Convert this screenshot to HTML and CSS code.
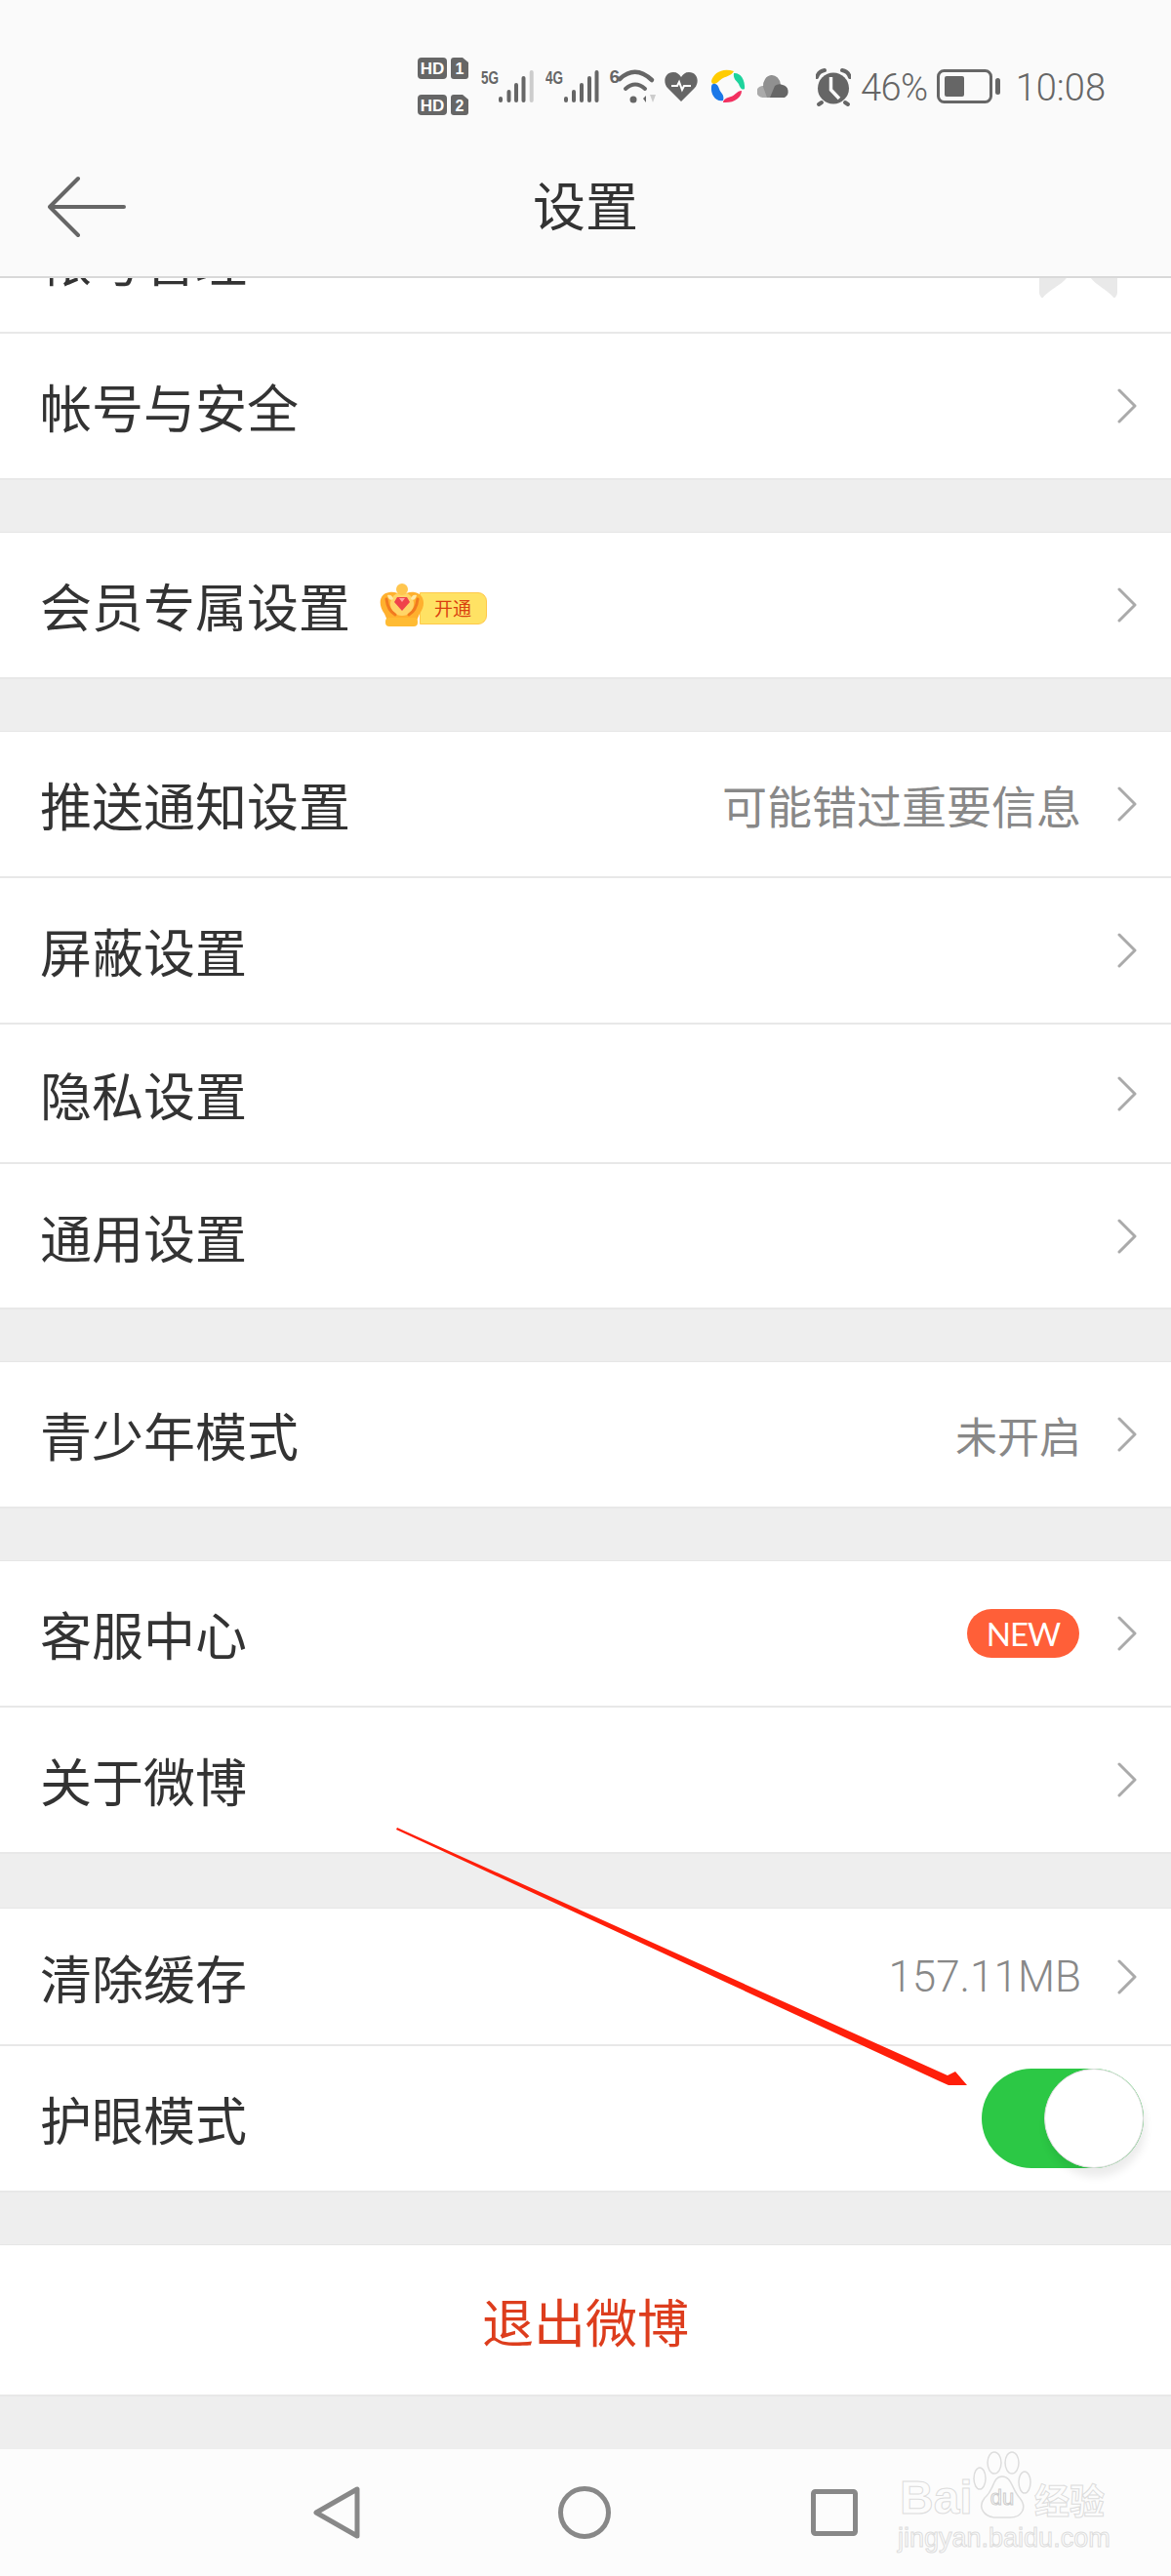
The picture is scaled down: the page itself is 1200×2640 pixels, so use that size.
FILE: index.html
```html
<!DOCTYPE html>
<html lang="zh-CN">
  <head>
    <meta charset="UTF-8" />
    <title>设置</title>
    <link rel="stylesheet" href="styles.css">
  </head>
  <body>
    <svg class="defs">
      <symbol id="chevron" viewBox="0 0 20 36">
        <path d="M2 2 L18 18 L2 34" fill="none" stroke="#aaa" stroke-width="3" stroke-linecap="round" stroke-linejoin="round" />
      </symbol>
    </svg>

    <header class="topbar">
      <div class="status">
        <svg class="ic" width="52" height="65" viewBox="0 0 52 65">
          <rect x="0" y="4" width="30" height="22" rx="4" fill="#666" />
          <text x="15" y="21" class="ic-txt light" text-anchor="middle" font-size="17">HD</text>
          <path d="M37 4 h9 l6 5 v14 a3 3 0 0 1 -3 3 h-12 a3 3 0 0 1 -3 -3 v-16 a3 3 0 0 1 3 -3z" fill="#666" />
          <text x="43" y="21" class="ic-txt light" text-anchor="middle" font-size="16">1</text>
          <rect x="0" y="42" width="30" height="21" rx="4" fill="#666" />
          <text x="15" y="58.500" class="ic-txt light" text-anchor="middle" font-size="17">HD</text>
          <path d="M37 42 h9 l6 5 v13 a3 3 0 0 1 -3 3 h-12 a3 3 0 0 1 -3 -3 v-15 a3 3 0 0 1 3 -3z" fill="#666" />
          <text x="43" y="58.500" class="ic-txt light" text-anchor="middle" font-size="16">2</text>
        </svg>
        <svg class="ic gap-13" width="54" height="65" viewBox="0 0 54 65">
          <text x="0" y="31" class="ic-txt" font-size="18" textLength="18" lengthAdjust="spacingAndGlyphs">5G</text>
          <rect x="18" y="44" width="4" height="6" rx="2" fill="#666" />
          <rect x="26.500" y="37" width="4" height="13" rx="2" fill="#666" />
          <rect x="34" y="30" width="4" height="20" rx="2" fill="#666" />
          <rect x="41.500" y="23" width="4" height="27" rx="2" fill="#666" />
          <rect x="49.700" y="17" width="4" height="33" rx="2" fill="#ccc" />
        </svg>
        <svg class="ic gap-12" width="55" height="65" viewBox="0 0 55 65">
          <text x="0" y="31" class="ic-txt" font-size="18" textLength="18" lengthAdjust="spacingAndGlyphs">4G</text>
          <rect x="19" y="44" width="4" height="6" rx="2" fill="#666" />
          <rect x="27" y="37" width="4" height="13" rx="2" fill="#666" />
          <rect x="35" y="30" width="4" height="20" rx="2" fill="#666" />
          <rect x="43" y="23" width="4" height="27" rx="2" fill="#666" />
          <rect x="50.500" y="17" width="4" height="33" rx="2" fill="#666" />
        </svg>
        <svg class="ic gap-10" width="49" height="65" viewBox="0 0 49 65">
          <text x="0.500" y="30" class="ic-txt" font-size="19">6</text>
          <path d="M11 26 Q27 11 44 27" fill="none" stroke="#666" stroke-width="4.500" stroke-linecap="round" />
          <path d="M17 36 Q27 27 37 36" fill="none" stroke="#666" stroke-width="4" stroke-linecap="round" />
          <circle cx="25" cy="47" r="3.500" fill="#666" />
          <path d="M38 50 v-7 l-3 3z" fill="#666" />
          <path d="M42 42 h6 l-3 8z" fill="#ccc" />
        </svg>
        <svg class="ic gap-8" width="34" height="65" viewBox="0 0 34 65">
          <path d="M17 49 L3 35 C-2 29 0 19 9 19 C13 19 15 21 17 24 C19 21 21 19 25 19 C34 19 36 29 31 35Z" fill="#666" />
          <path d="M7 33 H13 L15 29 L18 37 L20 33 H27" fill="none" stroke="#fff" stroke-width="2" />
        </svg>
        <svg class="ic gap-13" width="36" height="65" viewBox="0 0 36 65">
          <path d="M1 28 C3 20 12 14 24 18 C22 22 17 23 13 25 C9 27 8 30 4 31 C2 31 1 30 1 28Z" fill="#fc0" />
          <path d="M24 20 C30 19 36 26 35 36 C32 38 30 34 29 31 C27 28 23 26 24 20Z" fill="#1dd39c" />
          <path d="M32 38 C32 45 24 51 13 50 C13 47 17 45 21 44 C25 43 27 38 32 38Z" fill="#f2305f" />
          <path d="M3 31 C6 30 8 33 9 36 C10 40 15 42 13 48 C6 50 0 42 1 34 C1 32 2 31 3 31Z" fill="#1b78e8" />
        </svg>
        <svg class="ic gap-12" width="33" height="65" viewBox="0 0 33 65">
          <path d="M6 45 a6 6 0 0 1 -1 -12 h10 v12z" fill="#aaa" />
          <path d="M6 34 a9 11 0 0 1 18 -2 v13 h-14z" fill="#909090" />
          <path d="M13 45 L18 33 a8 8 0 0 1 8 -1 a7 7 0 0 1 2 13z" fill="#666" />
        </svg>
        <svg class="ic gap-27" width="36" height="65" viewBox="0 0 36 65">
          <circle cx="18" cy="35.500" r="16" fill="#666" />
          <path d="M15.500 24 V37 L24 46" fill="none" stroke="#fbfbfb" stroke-width="3.500" />
          <path d="M1 24 Q3 18 9 17 M35 24 Q33 18 27 17" fill="none" stroke="#666" stroke-width="4" stroke-linecap="round" />
          <path d="M6 50 L3 52 M30 50 L33 52" fill="none" stroke="#666" stroke-width="4" stroke-linecap="round" />
        </svg>
        <span class="st-text pct">46%</span>
        <svg class="ic gap-9" width="65" height="65" viewBox="0 0 65 65">
          <rect x="1.500" y="17.500" width="54" height="32" rx="6" fill="none" stroke="#666" stroke-width="3" />
          <rect x="8" y="23" width="20" height="21" rx="2" fill="#666" />
          <rect x="60" y="25" width="5" height="17" rx="2.500" fill="#666" />
        </svg>
        <span class="st-text time">10:08</span>
      </div>
      <div class="titlebar">
        <svg class="back" width="80" height="64" viewBox="0 0 80 64">
          <path d="M31 3 L2 32 L31 61 M2 32 H78" fill="none" stroke="#666" stroke-width="4" stroke-linecap="round" stroke-linejoin="round" />
        </svg>
        <h1>设置</h1>
      </div>
    </header>

    <main class="list">
      <section class="group first">
        <div class="row">
          <span class="name">帐号管理</span>
          <svg class="avatar" width="80" height="80" viewBox="0 0 80 80">
            <rect width="80" height="80" rx="6" fill="#e9e9e9" />
            <path d="M31 50 H50 C50 64 68 68 77 80 H3 C12 68 31 64 31 50Z" fill="#fff" />
          </svg>
        </div>
        <div class="row">
          <span class="name">帐号与安全</span>
          <svg class="chev"><use href="#chevron" /></svg>
        </div>
      </section>

      <section class="group">
        <div class="row">
          <span class="name">会员专属设置</span>
          <div class="vip">
            <svg class="crown" width="47" height="45" viewBox="0 0 47 45">
              <path d="M5 31 C-3 20 1 10 10 9 C15 8 19 10 23 12 C27 10 31 8 36 9 C44 10 49 20 41 31 L38 38 H8Z" fill="#ffb02e" />
              <ellipse cx="23" cy="21" rx="12" ry="12" fill="#ffd568" />
              <path d="M7 16 C8 24 11 29 16 32 M39 16 C38 24 35 29 30 32" fill="none" stroke="#f27a1f" stroke-width="3" stroke-linecap="round" />
              <path d="M8 12 C12 11 13 13 14 16 C11 18 9 16 8 12Z M38 12 C34 11 33 13 32 16 C35 18 37 16 38 12Z" fill="#ffe9a8" />
              <rect x="6" y="35" width="33" height="9" rx="4" fill="#ffbb33" />
              <circle cx="23" cy="6" r="6" fill="#ffc64f" />
              <path d="M18 14 H28 L31 19 L23 28 L15 19Z" fill="#f0434a" />
              <path d="M20 15 H26 L23 19Z" fill="#ffa4a0" />
            </svg>
            <span class="vip-tag">开通</span>
          </div>
          <svg class="chev"><use href="#chevron" /></svg>
        </div>
      </section>

      <section class="group">
        <div class="row">
          <span class="name">推送通知设置</span>
          <span class="val">可能错过重要信息</span>
          <svg class="chev"><use href="#chevron" /></svg>
        </div>
        <div class="row">
          <span class="name">屏蔽设置</span>
          <svg class="chev"><use href="#chevron" /></svg>
        </div>
        <div class="row row-privacy">
          <span class="name">隐私设置</span>
          <svg class="chev"><use href="#chevron" /></svg>
        </div>
        <div class="row row-general">
          <span class="name">通用设置</span>
          <svg class="chev"><use href="#chevron" /></svg>
        </div>
      </section>

      <section class="group">
        <div class="row">
          <span class="name">青少年模式</span>
          <span class="val val-short">未开启</span>
          <svg class="chev"><use href="#chevron" /></svg>
        </div>
      </section>

      <section class="group">
        <div class="row">
          <span class="name">客服中心</span>
          <span class="new">NEW</span>
          <svg class="chev"><use href="#chevron" /></svg>
        </div>
        <div class="row">
          <span class="name">关于微博</span>
          <svg class="chev"><use href="#chevron" /></svg>
        </div>
      </section>

      <section class="group group-cache">
        <div class="row row-clear">
          <span class="name">清除缓存</span>
          <span class="val num">157.11MB</span>
          <svg class="chev"><use href="#chevron" /></svg>
        </div>
        <div class="row row-toggle">
          <span class="name">护眼模式</span>
          <div class="toggle"><div class="knob"></div></div>
        </div>
      </section>

      <section class="group">
        <div class="row row-exit">退出微博</div>
      </section>
    </main>

    <footer class="navbar">
      <svg class="nav-ic" width="48" height="54" viewBox="0 0 48 54">
        <path d="M45 3 V51 L3 27Z" fill="none" stroke="#888" stroke-width="5" stroke-linejoin="round" />
      </svg>
      <svg class="nav-ic" width="54" height="54" viewBox="0 0 54 54">
        <circle cx="27" cy="27" r="24.500" fill="none" stroke="#888" stroke-width="5" />
      </svg>
      <svg class="nav-ic" width="48" height="48" viewBox="0 0 48 48">
        <rect x="2.500" y="2.500" width="43" height="43" rx="2" fill="none" stroke="#888" stroke-width="5" />
      </svg>
      <div class="mark">
        <span class="mark-bai">Bai</span>
        <svg class="paw" width="64" height="70" viewBox="0 0 64 70">
          <g fill="#fcfcfc" stroke="#ddd" stroke-width="1.500">
            <ellipse cx="24" cy="12" rx="7" ry="11" />
            <ellipse cx="42" cy="12" rx="7" ry="11" />
            <ellipse cx="9" cy="28" rx="6" ry="11" />
            <ellipse cx="55" cy="32" rx="6" ry="11" />
            <path d="M32 26 C22 26 24 40 14 48 C6 58 14 68 26 68 H40 C52 68 58 58 50 48 C42 40 42 26 32 26Z" />
          </g>
          <text x="32" y="55" text-anchor="middle" class="mark-du">du</text>
        </svg>
        <span class="mark-cn">经验</span>
        <span class="mark-url">jingyan.baidu.com</span>
      </div>
    </footer>

    <!-- red annotation arrow over the list -->
    <svg class="pointer" width="1200" height="2640" viewBox="0 0 1200 2640">
      <polygon points="407,1873 971,2127 979,2123 991,2137 972,2137 963,2133 406,1875" fill="#ff1f0a" />
    </svg>
  </body>
</html>
```

FILE: styles.css
```css
* {
  box-sizing: border-box;
  margin: 0;
}

body {
  position: relative;
  width: 1200px;
  height: 2640px;
  overflow: hidden;
  background-color: #eee;
  color: #333;
  font-family: "Noto Sans CJK SC", sans-serif;
}

.defs {
  display: none;
}

/* top area, sits over the scrolled list */
.topbar {
  position: relative;
  z-index: 2;
  height: 285px;
  background-color: #fafafa;
  border-bottom: 2px solid #d9d9d9;
}

.status {
  display: flex;
  justify-content: flex-end;
  height: 130px;
  padding-top: 55px;
  padding-right: 67px;
}

.ic {
  flex: none;
}

.ic-txt {
  font-family: "Liberation Sans", sans-serif;
  font-weight: 700;
  fill: #666;
}

.light {
  fill: #fff;
}

.gap-8 { margin-left: 8px; }
.gap-9 { margin-left: 9px; }
.gap-10 { margin-left: 10px; }
.gap-12 { margin-left: 12px; }
.gap-13 { margin-left: 13px; }
.gap-27 { margin-left: 27px; }

.st-text {
  font-family: Roboto, sans-serif;
  font-weight: 300;
  font-size: 38px;
  line-height: 70px;
  color: #666;
}

.pct {
  margin-left: 10px;
  letter-spacing: -0.5px;
}

.time {
  margin-left: 16px;
}

.titlebar {
  display: flex;
  align-items: center;
  justify-content: center;
  position: relative;
  height: 153px;
  padding-top: 4px;
}

.titlebar h1 {
  font-size: 54px;
  font-weight: 400;
  color: #333;
}

.back {
  position: absolute;
  left: 49px;
  top: 50px;
}

/* list starts above the bottom of the top area */
.list {
  margin-top: -93px;
}

.group {
  margin-top: 53px;
  background-color: #fff;
  border-top: 1px solid #e6e6e6;
}

.group.first {
  margin-top: 0;
  border-top: 0;
}

.group-cache {
  margin-top: 55px;
}

.row {
  display: flex;
  align-items: center;
  height: 150px;
  padding-left: 41px;
  padding-right: 35px;
  border-bottom: 2px solid #e8e8e8;
}

.row-privacy {
  height: 143px;
}

.row-general {
  height: 149px;
}

.row-clear {
  height: 141px;
}

.row-toggle {
  padding-right: 28px;
}

.row-exit {
  justify-content: center;
  height: 155px;
  padding: 0;
  font-size: 53px;
  color: #dd3d1d;
}

.name {
  flex: 1;
  font-size: 53px;
}

.row:has(.vip) .name {
  flex: none;
}

.val {
  margin-right: 37px;
  font-size: 46px;
  color: #888;
}

.val-short {
  font-size: 43px;
}

.num {
  font-family: Roboto, "Noto Sans CJK SC", sans-serif;
  font-size: 44px;
  font-weight: 300;
}

.chev {
  flex: none;
  width: 20px;
  height: 36px;
}

.avatar {
  margin-right: 20px;
}

.vip {
  display: flex;
  align-items: center;
  flex: 1;
  margin-left: 30px;
}

.crown {
  position: relative;
  z-index: 1;
  flex: none;
}

.vip-tag {
  width: 69px;
  height: 33px;
  margin-left: -6px;
  margin-top: 6px;
  padding-left: 14px;
  border: 1px solid #ffc84a;
  border-radius: 0 9px 9px 0;
  background-color: #ffe264;
  color: #d9400f;
  font-size: 19px;
  line-height: 30px;
}

.new {
  width: 115px;
  height: 50px;
  margin-right: 39px;
  border-radius: 25px;
  background-color: #ff5f38;
  color: #fff;
  font-family: Lato, sans-serif;
  font-size: 33px;
  letter-spacing: -1px;
  line-height: 50px;
  text-align: center;
}

.toggle {
  display: flex;
  justify-content: flex-end;
  width: 166px;
  height: 102px;
  border-radius: 51px;
  background-color: #2cc845;
}

.knob {
  width: 102px;
  height: 102px;
  border: 1px solid #ddd;
  border-radius: 50%;
  background-color: #fff;
  box-shadow: 2px 9px 8px rgba(0, 0, 0, 0.08);
}

.navbar {
  position: absolute;
  left: 0;
  right: 0;
  bottom: 0;
  display: flex;
  align-items: center;
  height: 130px;
  padding-left: 321px;
  background-color: #fcfcfc;
}

.nav-ic:nth-child(2) {
  margin-left: 203px;
}

.nav-ic:nth-child(3) {
  margin-left: 205px;
}

/* watermark in the corner of the nav bar */
.mark {
  position: absolute;
  left: 920px;
  top: 0;
  width: 230px;
  height: 130px;
}

.mark span {
  position: absolute;
  color: #fcfcfc;
  -webkit-text-stroke: 1px #ddd;
  line-height: 1;
}

.mark-bai {
  left: 2px;
  top: 30px;
  font-family: "Liberation Sans", sans-serif;
  font-weight: 700;
  font-size: 48px;
}

.mark span.mark-bai {
  line-height: 40px;
}

.paw {
  position: absolute;
  left: 75px;
  top: 2px;
}

.mark-du {
  font-family: "Liberation Sans", sans-serif;
  font-size: 22px;
  fill: #fcfcfc;
  stroke: #ccc;
  stroke-width: 1;
}

.mark-cn {
  left: 140px;
  top: 33px;
  font-size: 36px;
  font-weight: 700;
}

.mark-url {
  left: 0;
  top: 78px;
  font-family: "Liberation Sans", sans-serif;
  font-size: 27px;
}

/* annotation lies over the whole page */
.pointer {
  position: absolute;
  left: 0;
  top: 0;
  z-index: 3;
  pointer-events: none;
}
```
